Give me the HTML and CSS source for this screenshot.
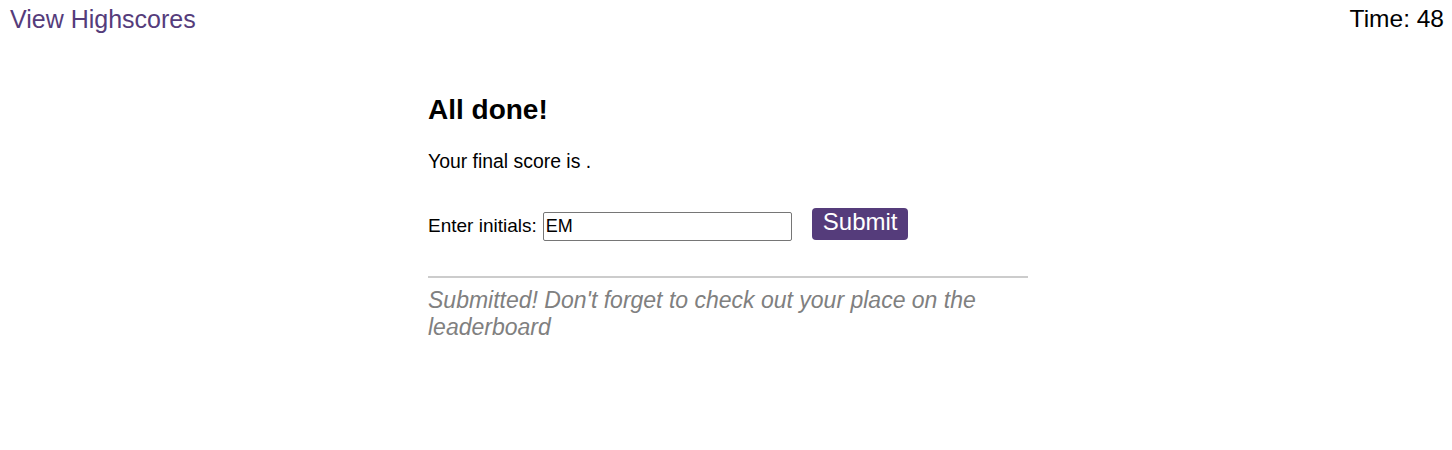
FILE: index.html
```html
<!DOCTYPE html>
<html lang="en">
<head>
<meta charset="utf-8">
<title>Quiz</title>
<link rel="stylesheet" href="styles.css">
</head>
<body>
<header class="topbar">
  <a class="highscores" href="#">View Highscores</a>
  <div class="timer">Time: 48</div>
</header>
<main class="quiz">
  <h2 class="title">All done!</h2>
  <p class="score">Your final score is .</p>
  <form class="entry">
    <label class="entry-label" for="initials">Enter initials:</label>
    <input class="entry-input" id="initials" type="text" value="EM">
    <button class="entry-submit" type="button">Submit</button>
  </form>
  <div class="feedback">
    <p class="feedback-text">Submitted! Don't forget to check out your place on the leaderboard</p>
  </div>
</main>
</body>
</html>
```

FILE: styles.css
```css
html, body {
  margin: 0;
  padding: 0;
  background: #ffffff;
}

body {
  font-family: "Liberation Sans", Arial, sans-serif;
  color: #000000;
  font-size: 18px;
}

.topbar {
  display: flex;
  justify-content: space-between;
  align-items: flex-start;
  padding: 5px 8px 0 10px;
  font-size: 25px;
  line-height: normal;
}

.highscores {
  color: #553c7b;
  text-decoration: none;
}

.timer {
  color: #000000;
  font-size: 24.5px;
}

.quiz {
  width: 600px;
  margin: 0 auto;
  padding: 60px 0 0 4px;
}

.title {
  margin: 0;
  font-size: 28px;
  font-weight: bold;
  line-height: normal;
}

.score {
  margin: 24px 0 0;
  font-size: 19.4px;
  line-height: normal;
}

.entry {
  display: flex;
  align-items: flex-start;
  margin-top: 35px;
}

.entry-label {
  margin-top: 7px;
  font-size: 19px;
  line-height: normal;
}

.entry-input {
  box-sizing: border-box;
  width: 249px;
  height: 29px;
  margin: 4px 0 0 6px;
  padding: 1px 2px;
  border: 1px solid #767676;
  border-radius: 2px;
  font-family: "Liberation Sans", Arial, sans-serif;
  font-size: 18px;
  color: #000000;
  background: #ffffff;
}

.entry-submit {
  box-sizing: border-box;
  height: 32px;
  margin-left: 20px;
  padding: 0 11px 4px;
  border: none;
  border-radius: 4px;
  background: #553c7b;
  color: #ffffff;
  font-family: "Liberation Sans", Arial, sans-serif;
  font-size: 24px;
  line-height: 28px;
  cursor: pointer;
}

.feedback {
  margin-top: 35px;
  border-top: 2px solid #cccccc;
}

.feedback-text {
  margin: 9px 0 0;
  font-size: 23px;
  font-style: italic;
  color: #808080;
  line-height: normal;
}
```
